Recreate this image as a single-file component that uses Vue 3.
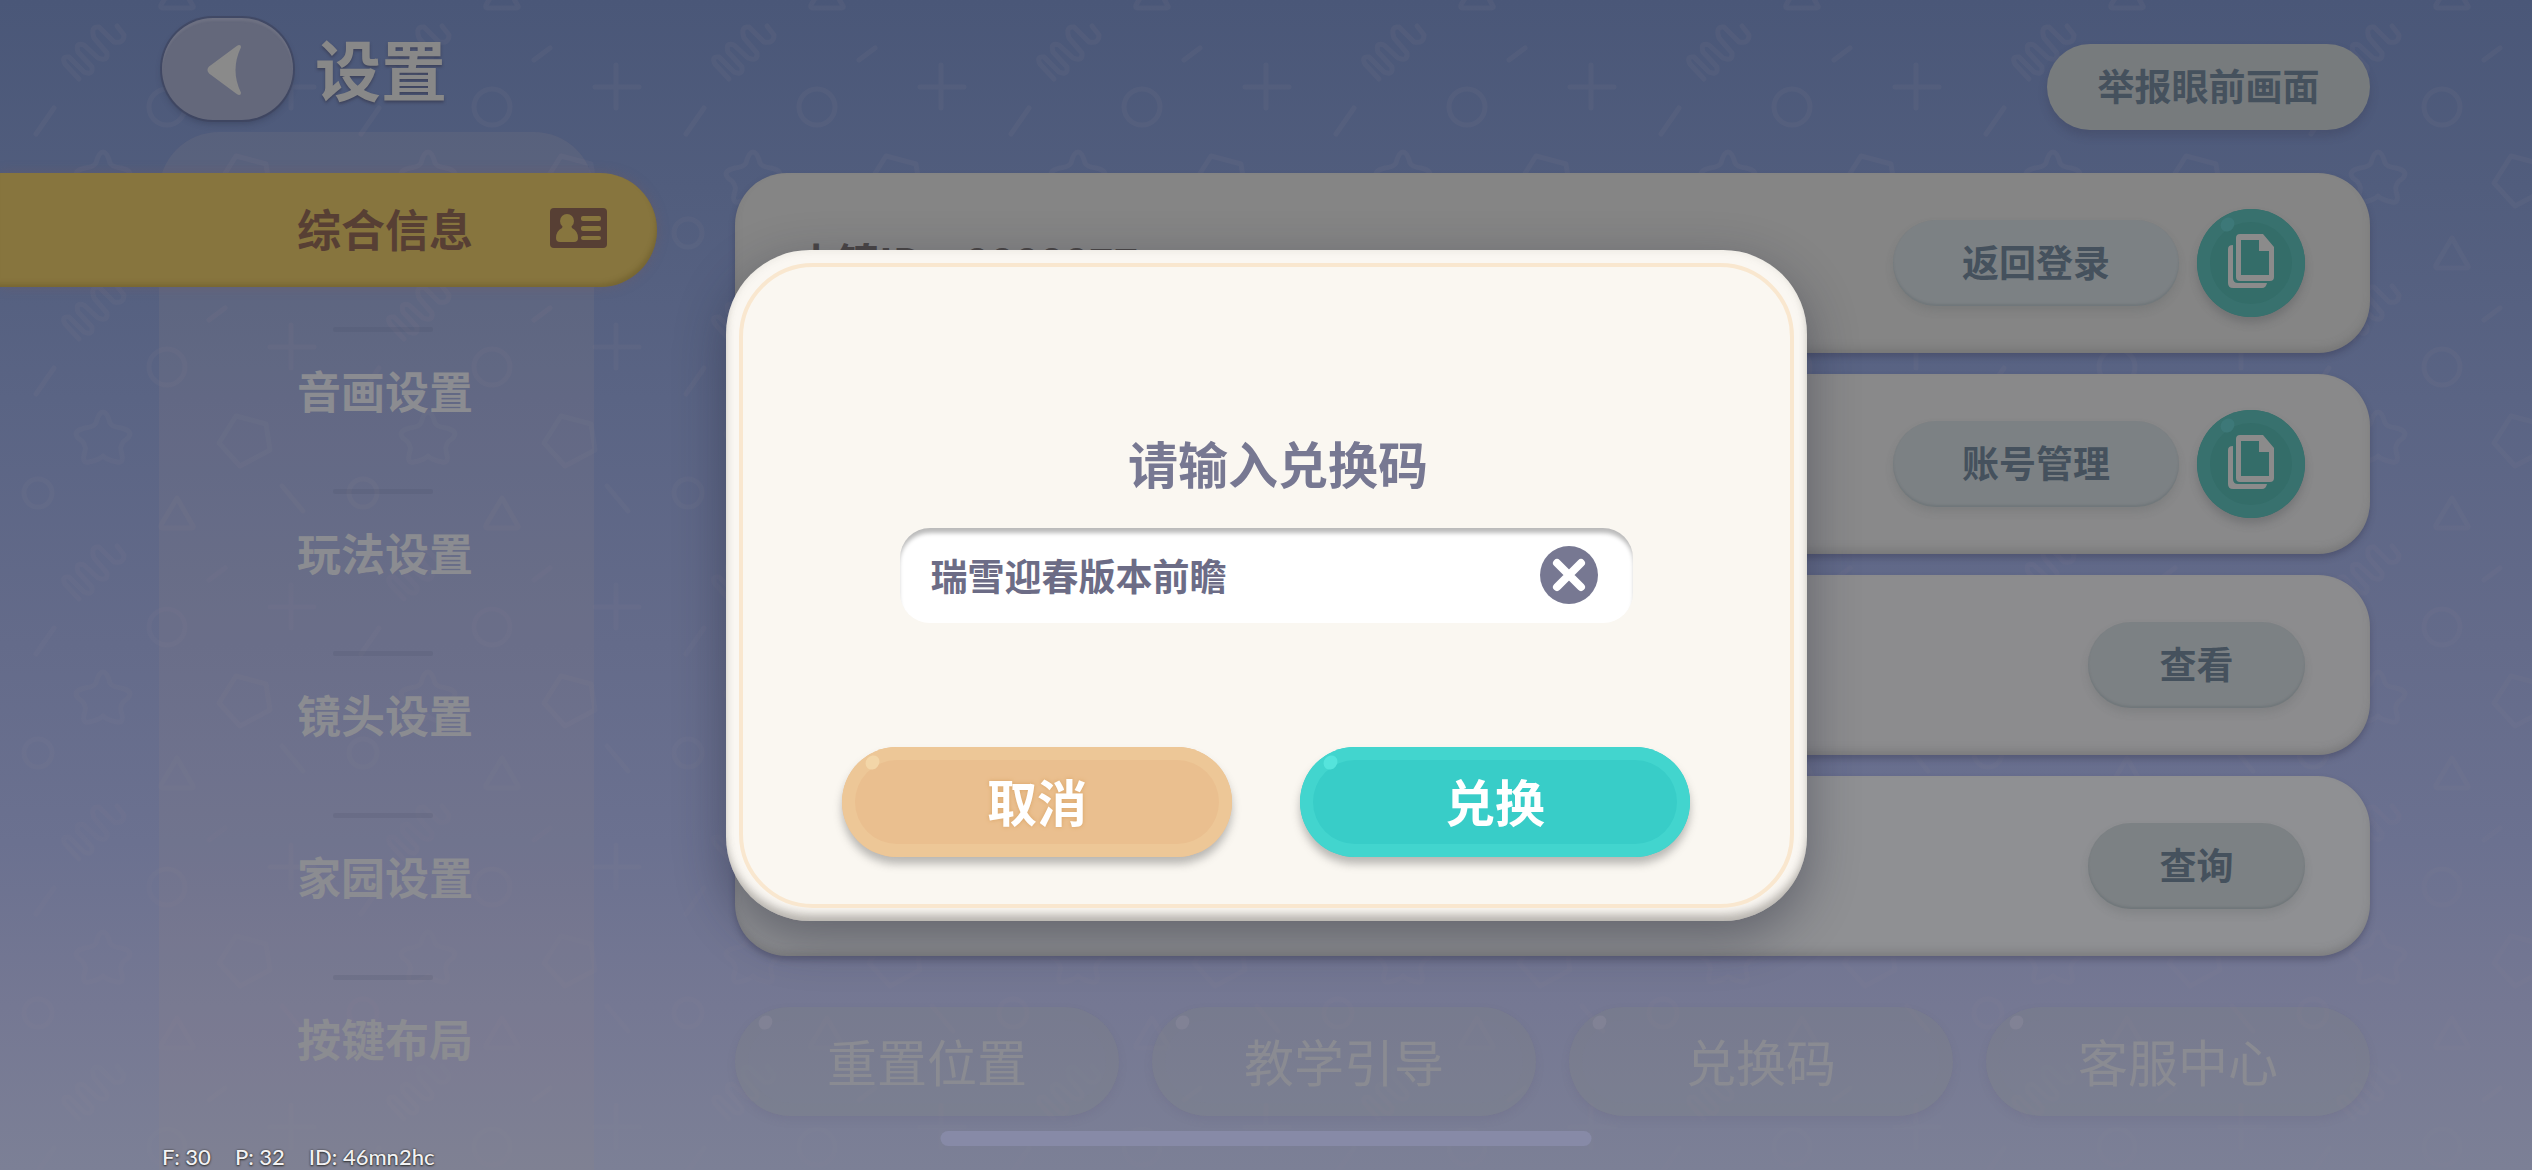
<template>
  <div class="screen">
    <!-- Confetti pattern behind everything -->
    <svg class="pattern" aria-hidden="true">
      <defs>
        <linearGradient id="fade" x1="0" y1="0" x2="0" y2="1">
          <stop offset="0" stop-color="#fff" />
          <stop offset="1" stop-color="#888" />
        </linearGradient>
        <mask id="fade-mask">
          <rect width="100%" height="100%" fill="url(#fade)" />
        </mask>
        <pattern id="confetti" width="325" height="260" patternUnits="userSpaceOnUse">
          <g fill="none" stroke="#a09298" stroke-width="5" stroke-linecap="round" stroke-linejoin="round">
            <path d="M79 79 L65 64 Q61 56 69 57 L84 72 Q93 76 92 67 L78 52 Q75 42 84 45 L98 58 Q108 62 107 53 L94 38 Q90 26 99 27 L114 42 Q124 44 124 35 L117 26" />
            <path d="M177 -22 L193 6 Q194 8 191 8 L163 8 Q160 8 161 5 Z" />
            <path d="M177 238 L193 266 Q194 268 191 268 L163 268 Q160 268 161 265 Z" />
            <circle cx="167" cy="107" r="18" />
            <path d="M36 134 L54 108" />
            <path d="M209 60 L225 48" />
            <path d="M291 65 V108 M270 87 H314" />
            <circle cx="38" cy="233" r="14" />
            <path d="M282 226 L303 251" />
            <path d="M236 156 L266 164 L270 190 L240 206 L219 183 Z" />
            <path d="M103 152 Q107 152 110 163 Q112 167 121 168 Q134 171 128 178 Q119 184 121 191 Q125 204 117 202 Q107 200 103 196 Q99 200 89 202 Q81 204 85 191 Q87 184 78 178 Q72 171 85 168 Q94 167 96 163 Q99 152 103 152 Z" />
          </g>
        </pattern>
      </defs>
      <rect width="100%" height="100%" fill="url(#confetti)" mask="url(#fade-mask)" />
    </svg>

    <aside class="side">
      <header class="side-head">
        <button class="back" type="button" aria-label="返回">
          <svg width="36" height="52" viewBox="0 0 36 52">
            <path d="M33 3 Q22 26 33 49 Q33 51 30 49 L3 29 Q0 26 3 23 L30 3 Q33 1 33 3 Z" fill="#8a8a8a" stroke="#8a8a8a" stroke-width="2" stroke-linejoin="round" />
          </svg>
        </button>
        <h1 class="page-title">设置</h1>
      </header>

      <nav class="menu">
        <button
          v-for="item in menu"
          :key="item"
          type="button"
          class="menu-item"
          :class="{ active: item === current }"
          @click="current = item"
        >
          <span>{{ item }}</span>
          <svg v-if="item === current" class="menu-icon" width="57" height="40" viewBox="0 0 57 40">
            <rect width="57" height="40" rx="4" fill="#573f34" />
            <g fill="#87753e">
              <ellipse cx="17" cy="13" rx="7" ry="7" />
              <path d="M13 17 H21 L22 20 Q28 23 28 30 Q28 34 24 34 H10 Q6 34 6 30 Q6 23 12 20 Z" />
              <rect x="31" y="8" width="20" height="5" rx="2" />
              <rect x="31" y="18" width="20" height="5" rx="2" />
              <rect x="31" y="28" width="20" height="4" rx="2" />
            </g>
          </svg>
        </button>
      </nav>
    </aside>

    <main class="content">
      <button class="pill report" type="button">举报眼前画面</button>

      <section class="cards">
        <div v-for="(card, i) in cards" :key="card.action" class="card" :class="'card-' + i">
          <span class="card-label">{{ card.label }}</span>
          <button class="pill" :class="card.copy ? 'wide' : 'short'" type="button">{{ card.action }}</button>
          <button v-if="card.copy" class="copy" type="button" aria-label="复制">
            <svg width="46" height="54" viewBox="0 0 46 54">
              <path d="M12 0 H35 L46 13 V43 Q46 47 42 47 H12 Q8 47 8 43 V4 Q8 0 12 0 Z M13 6 V41 H41 V17 H31 V6 Z" fill="#8b8b8b" fill-rule="evenodd" />
              <path d="M5 11 V44 Q5 49 10 49 H39 Q38 54 34 54 H5 Q0 54 0 49 V15 Q0 11 5 11 Z" fill="#8b8b8b" />
            </svg>
          </button>
        </div>
      </section>

      <div class="actions">
        <button v-for="a in actions" :key="a" class="action" type="button">{{ a }}</button>
      </div>
    </main>

    <p class="status">
      <span>F: 30</span><span>P: 32</span><span>ID: 46mn2hc</span>
    </p>

    <!-- Redeem code dialog -->
    <div class="overlay">
      <form class="dialog" role="dialog" @submit.prevent>
        <div class="dialog-body">
          <label class="dialog-title" for="code">请输入兑换码</label>
          <div class="field">
            <input id="code" v-model="code" type="text" autocomplete="off" />
            <button class="clear" type="button" aria-label="清除" @click="code = ''">
              <svg width="58" height="58" viewBox="0 0 58 58">
                <circle cx="29" cy="29" r="29" fill="#777892" />
                <path d="M17 17 L41 41 M41 17 L17 41" stroke="#fff" stroke-width="8" stroke-linecap="round" />
              </svg>
            </button>
          </div>
          <div class="dialog-actions">
            <button class="btn cancel" type="button">取消</button>
            <button class="btn confirm" type="submit">兑换</button>
          </div>
        </div>
      </form>
    </div>

    <div class="home-bar"></div>
  </div>
</template>

<script setup>
import { ref } from 'vue'

const menu = ['综合信息', '音画设置', '玩法设置', '镜头设置', '家园设置', '按键布局']
const current = ref('综合信息')

const cards = [
  { label: '小镇ID：8888877', action: '返回登录', copy: true },
  { label: '', action: '账号管理', copy: true },
  { label: '', action: '查看', copy: false },
  { label: '', action: '查询', copy: false },
]

const actions = ['重置位置', '教学引导', '兑换码', '客服中心']

const code = ref('瑞雪迎春版本前瞻')
</script>

<style>
body {
  margin: 0;
}
</style>

<style scoped>
.screen {
  position: relative;
  display: flex;
  min-height: 100vh;
  overflow: hidden;
  background: linear-gradient(#4a5778 0%, #515d7d 16%, #5a6484 34%, #646b8a 55%, #6b7190 72%, #757893 86%, #7c8096 100%);
  font-family: 'Noto Sans CJK SC', sans-serif;
  font-weight: 700;
}
button {
  border: 0;
  padding: 0 0 4px;
  background: none;
  font: inherit;
  color: inherit;
  cursor: pointer;
}
svg {
  display: block;
}
.pattern {
  position: absolute;
  inset: 0;
  width: 100%;
  height: 100%;
  opacity: 0.08;
}

/* Left side */
.side {
  position: relative;
  display: flex;
  flex-direction: column;
  flex: none;
  width: 657px;
}
.side-head {
  display: flex;
  align-items: center;
  gap: 22px;
  padding: 18px 0 12px 162px;
}
.back {
  display: flex;
  align-items: center;
  justify-content: center;
  width: 131px;
  height: 102px;
  padding: 2px 6px 0 0;
  border-radius: 51px;
  background: #64687b;
  box-shadow: 0 0 0 2px rgba(60, 65, 90, 0.6), 0 4px 6px rgba(40, 45, 70, 0.35), inset 0 3px 2px rgba(140, 140, 150, 0.25);
}
.page-title {
  margin: 0;
  font-size: 66px;
  line-height: 98px;
  padding-bottom: 4px;
  color: #888;
  text-shadow: 0 2px 3px rgba(50, 50, 70, 0.6);
}
.menu {
  flex: 1;
  display: flex;
  flex-direction: column;
  margin: 0 63px 0 159px;
  padding-top: 41px;
  border-radius: 60px 60px 0 0;
  background: rgba(148, 136, 132, 0.14);
}
.menu-item {
  position: relative;
  display: flex;
  align-items: center;
  height: 114px;
  margin-bottom: 48px;
  padding-left: 138px;
  font-size: 44px;
  color: #8b8c91;
}
.menu-item + .menu-item::before {
  content: '';
  position: absolute;
  left: 174px;
  top: -8px;
  width: 100px;
  height: 5px;
  border-radius: 2px;
  background: rgba(70, 72, 100, 0.16);
}
.menu-item.active {
  margin-left: -159px;
  margin-right: -63px;
  padding-left: 297px;
  border-radius: 0 57px 57px 0;
  background: #87753e;
  color: #573f34;
  box-shadow: 0 0 12px rgba(120, 90, 90, 0.35), inset -3px -5px 5px -2px rgba(90, 75, 30, 0.35);
}
.menu-icon {
  margin-left: 77px;
}

/* Right side */
.content {
  position: relative;
  display: flex;
  flex-direction: column;
  flex: 1;
  padding: 44px 162px 54px 78px;
}
.pill {
  flex: none;
  height: 86px;
  border-radius: 43px;
  background: #7c8184;
  color: #45515d;
  font-size: 37px;
  box-shadow: 0 5px 8px rgba(70, 72, 75, 0.16), inset 0 -2px 2px rgba(80, 90, 95, 0.25);
}
.report {
  align-self: flex-end;
  width: 323px;
  margin-bottom: 43px;
  background: #777b7d;
  box-shadow: 0 6px 8px rgba(50, 50, 75, 0.25);
}
.wide {
  width: 286px;
}
.short {
  width: 217px;
}
.cards {
  display: flex;
  flex-direction: column;
  gap: 21px;
}
.card {
  display: flex;
  align-items: center;
  gap: 18px;
  height: 180px;
  box-sizing: border-box;
  padding: 0 65px 0 60px;
  border-radius: 52px;
  box-shadow: 0 4px 6px rgba(50, 50, 75, 0.35), inset 0 -6px 8px -2px rgba(90, 90, 90, 0.35);
}
.card-0 { background: #858585; }
.card-1 { background: #89898a; }
.card-2 { background: #8c8c8e; }
.card-3 { background: #8f9093; }
.card-label {
  flex: 1;
  padding-bottom: 6px;
  font-size: 42px;
  color: #4a4646;
}
.copy {
  position: relative;
  display: flex;
  align-items: center;
  justify-content: center;
  width: 108px;
  height: 108px;
  border-radius: 50%;
  background: #346d69;
  box-shadow: inset 0 0 0 13px #38716e, 0 6px 8px rgba(70, 72, 75, 0.3);
}
.copy::before,
.action::before,
.btn::before {
  content: '';
  position: absolute;
  left: 24px;
  top: 8px;
  width: 13px;
  height: 15px;
  border-radius: 50%;
  transform: rotate(40deg);
}
.copy::before {
  background: #3d7878;
}
.actions {
  display: grid;
  grid-template-columns: repeat(4, 1fr);
  gap: 33px;
  margin-top: 51px;
}
.action {
  position: relative;
  height: 109px;
  border-radius: 55px;
  background: rgba(128, 136, 130, 0.2);
  color: #8a8b92;
  font-size: 50px;
  font-weight: 400;
  box-shadow: inset 0 0 0 13px rgba(140, 130, 135, 0.05), 0 4px 8px rgba(90, 85, 120, 0.14);
}
.action::before {
  background: #818295;
}

.status {
  position: absolute;
  left: 162px;
  bottom: 0;
  display: flex;
  gap: 24px;
  margin: 0;
  font-family: Lato, sans-serif;
  font-size: 22px;
  font-weight: 500;
  line-height: 26px;
  color: #f2f2f4;
  text-shadow: 0 0 2px #333, 0 1px 2px #333;
}
.home-bar {
  position: absolute;
  left: 50%;
  bottom: 24px;
  width: 651px;
  height: 15px;
  border-radius: 8px;
  background: #878aa7;
  transform: translateX(-50%);
}

/* Dialog */
.overlay {
  position: absolute;
  inset: 0;
  display: flex;
  align-items: center;
  justify-content: center;
}
.dialog {
  box-sizing: border-box;
  width: 1081px;
  padding: 13px;
  border-radius: 84px;
  background: #faf7f2;
  box-shadow: 0 16px 50px rgba(30, 32, 50, 0.4), inset 0 -9px 9px -2px rgba(110, 105, 100, 0.42), inset 0 0 8px rgba(120, 120, 110, 0.15);
}
.dialog-body {
  display: flex;
  flex-direction: column;
  align-items: center;
  padding: 165px 0 47px;
  border: 4px solid #f9e7cf;
  border-radius: 74px;
  background: #faf7f1;
}
.dialog-title {
  padding-left: 24px;
  font-size: 50px;
  line-height: 60px;
  color: #777892;
}
.field {
  display: flex;
  align-items: center;
  box-sizing: border-box;
  width: 733px;
  height: 95px;
  margin-top: 36px;
  padding: 0 35px 0 31px;
  border-radius: 30px;
  background: #fff;
  box-shadow: inset 0 6px 4px -1px rgba(0, 0, 0, 0.27);
}
.field input {
  flex: 1;
  min-width: 0;
  padding: 0;
  border: 0;
  outline: 0;
  background: none;
  font: inherit;
  font-size: 37px;
  color: #6c6c86;
}
.clear {
  padding: 0;
}
.dialog-actions {
  display: flex;
  gap: 68px;
  margin-top: 124px;
}
.btn {
  position: relative;
  width: 390px;
  height: 110px;
  border-radius: 55px;
  color: #fff;
  font-size: 50px;
}
.cancel {
  background: #eabf8f;
  box-shadow: inset 0 0 0 13px #edc797, 0 7px 9px rgba(90, 90, 90, 0.4);
  text-shadow: 0 0 4px #d9a465;
}
.cancel::before {
  background: #f3d6a8;
}
.confirm {
  background: #38cdc8;
  box-shadow: inset 0 0 0 13px #42d5ce, 0 7px 9px rgba(90, 90, 90, 0.4);
}
.confirm::before {
  background: #55e4dc;
}
</style>
